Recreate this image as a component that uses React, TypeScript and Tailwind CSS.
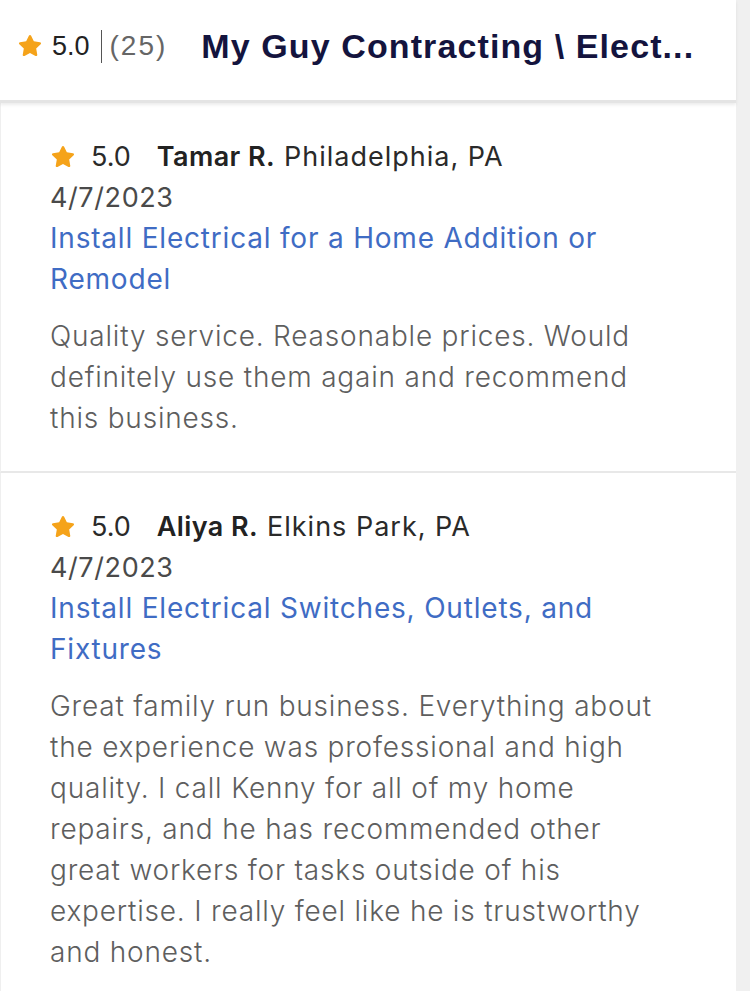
import React from "react";

interface Review {
  name: string;
  place: string;
  date: string;
  job: string;
  text: string;
}

const reviews: Review[] = [
  {
    name: "Tamar R.",
    place: "Philadelphia, PA",
    date: "4/7/2023",
    job: "Install Electrical for a Home Addition or Remodel",
    text: "Quality service. Reasonable prices. Would definitely use them again and recommend this business.",
  },
  {
    name: "Aliya R.",
    place: "Elkins Park, PA",
    date: "4/7/2023",
    job: "Install Electrical Switches, Outlets, and Fixtures",
    text: "Great family run business. Everything about the experience was professional and high quality. I call Kenny for all of my home repairs, and he has recommended other great workers for tasks outside of his expertise. I really feel like he is trustworthy and honest.",
  },
];

const Star = ({ size }: { size: number }) => (
  <svg width={size} height={size} viewBox="0 0 24 24">
    <path
      d="M12 1.8c.45 0 .85.26 1.04.67l2.5 5.2 5.66.78c.95.13 1.33 1.3.64 1.96l-4.13 3.96 1.01 5.62c.17.94-.82 1.66-1.66 1.2L12 18.5l-5.06 2.69c-.84.46-1.83-.26-1.66-1.2l1.01-5.62-4.13-3.96c-.69-.66-.31-1.83.64-1.96l5.66-.78 2.5-5.2c.19-.41.59-.67 1.04-.67z"
      fill="#f5a31a"
    />
  </svg>
);

const ReviewCard = ({ review }: { review: Review }) => {
  return (
    <div className="border-b-2 border-[#e8e8e8] border-l border-l-[#efefef] pl-[49px] pr-[60px] pt-[33px] pb-[32px] font-['Inter',sans-serif] text-[28px] leading-[41px]">
      <div className="flex items-center text-[27px]">
        <Star size={26} />
        <span className="ml-[15px] text-[#2a2a2a]">5.0</span>
        <span className="ml-[26px] font-semibold tracking-[0.4px] text-[#222]">{review.name}</span>
        <span className="ml-[9px] tracking-[1px] text-[#2a2a2a]">{review.place}</span>
      </div>
      <div className="text-[27px] tracking-[0.6px] text-[#4a4a4a]">{review.date}</div>
      <div className="tracking-[0.8px] text-[#3f6cc4]">{review.job}</div>
      <p className="mt-4 font-light tracking-[0.8px] text-[#5e5e5e]">{review.text}</p>
    </div>
  );
};

export default function App() {
  return (
    <div className="flex w-[750px] h-[991px] overflow-hidden bg-[#f0f0f0]">
      <div className="w-[736px] bg-white">
        <header className="relative z-10 flex h-[103px] items-center border-b-[3px] border-[#e4e4e4] pb-[8px] pl-[17px] font-['Liberation_Sans',Arial,sans-serif] shadow-[0_2px_3px_rgba(0,0,0,0.08)]">
          <Star size={26} />
          <span className="ml-[9px] text-[27px] text-[#222]">5.0</span>
          <span className="ml-[11px] mr-[8px] h-[33px] w-[1px] bg-[#555]" />
          <span className="text-[28px] tracking-[2px] text-[#666]">(25)</span>
          <span className="ml-[34px] text-[34px] tracking-[1.1px] font-bold text-[#14143e]">
            My Guy Contracting \ Elect...
          </span>
        </header>
        {reviews.map((r) => (
          <ReviewCard key={r.name} review={r} />
        ))}
      </div>
    </div>
  );
}
